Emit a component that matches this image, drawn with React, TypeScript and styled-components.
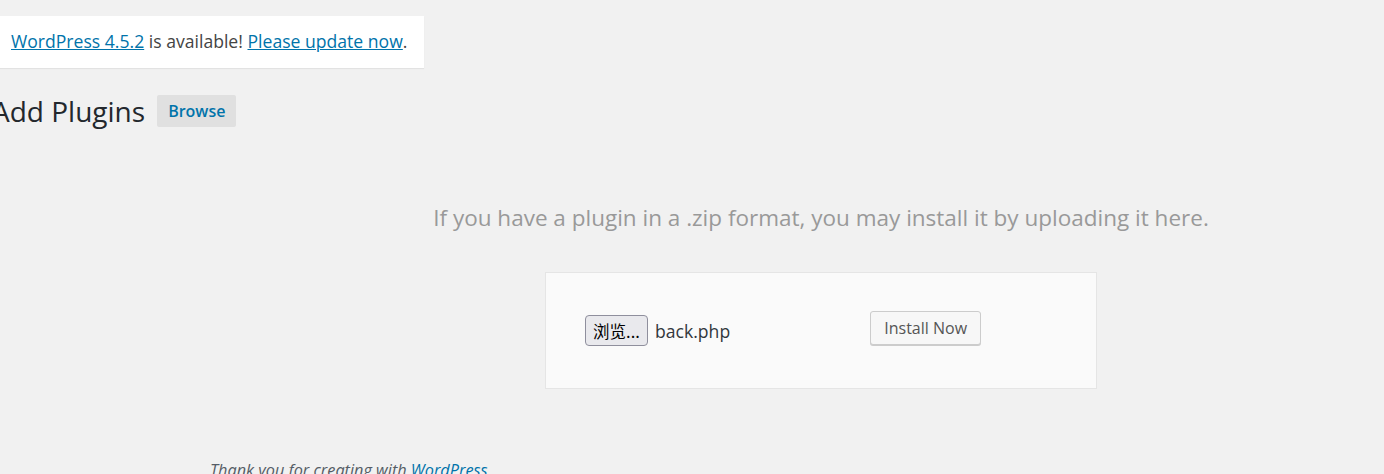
import React from "react";
import styled, { createGlobalStyle } from "styled-components";

const GlobalStyle = createGlobalStyle`
  html, body {
    margin: 0;
    padding: 0;
    background: #f1f1f1;
    overflow: hidden;
  }
  body {
    font-family: "Open Sans", "Noto Sans", sans-serif;
    color: #444;
  }
`;

const Page = styled.div`
  width: 1384px;
  height: 474px;
  overflow: hidden;
  position: relative;
`;

const Wrap = styled.div`
  margin-left: -20px;
  display: flex;
  flex-direction: column;
`;

const UpdateNag = styled.div`
  margin-top: 16px;
  width: 444px;
  height: 52px;
  box-sizing: border-box;
  padding-left: 31px;
  padding-bottom: 2px;
  display: flex;
  align-items: center;
  background: #fff;
  box-shadow: 0 1px 1px rgba(0, 0, 0, 0.06);
  font-size: 17.6px;
  color: #444;
`;

const Link = styled.a`
  color: #0073aa;
  text-decoration: underline;
`;

const TitleRow = styled.div`
  display: flex;
  align-items: center;
  margin-top: 27px;
  margin-left: 12px;
  height: 32px;
`;

const PageTitle = styled.h1`
  margin: 0;
  font-size: 28px;
  font-weight: 400;
  color: #23282d;
  line-height: 32px;
`;

const TitleAction = styled.a`
  margin-left: 12px;
  height: 32px;
  padding: 0 11px;
  display: inline-flex;
  align-items: center;
  background: #e0e0e0;
  border-radius: 2px;
  color: #0073aa;
  font-size: 16px;
  font-weight: 600;
  text-decoration: none;
`;

const UploadSection = styled.div`
  margin-left: 441px;
  width: 800px;
  display: flex;
  flex-direction: column;
  align-items: center;
`;

const InstallHelp = styled.p`
  margin: 0;
  margin-top: 76px;
  font-size: 22.5px;
  line-height: 30px;
  color: #999;
`;

const UploadForm = styled.form`
  margin-top: 39px;
  width: 552px;
  height: 117px;
  box-sizing: border-box;
  background: #fafafa;
  border: 1px solid #e5e5e5;
  padding: 38px 39px 0;
  display: flex;
  align-items: flex-start;
`;

const FileField = styled.div`
  display: flex;
  align-items: center;
  margin-top: 4px;
`;

const FileButton = styled.span`
  width: 63px;
  height: 31px;
  box-sizing: border-box;
  display: inline-flex;
  align-items: center;
  justify-content: center;
  background: #e9e9ed;
  border: 1px solid #8f8f9d;
  border-radius: 4px;
  font-family: "Noto Sans CJK SC", "Noto Sans", sans-serif;
  font-size: 16.5px;
  color: #000;
`;

const FileName = styled.span`
  margin-left: 7px;
  font-size: 17.6px;
  color: #32373c;
`;

const Button = styled.button`
  margin-left: 140px;
  height: 34px;
  width: 111px;
  box-sizing: border-box;
  background: #f7f7f7;
  border: 1px solid #ccc;
  border-radius: 3px;
  box-shadow: 0 1px 0 #ccc;
  color: #555;
  font-family: "Open Sans", sans-serif;
  font-size: 16px;
  padding: 0;
`;

const Footer = styled.p`
  margin: 0;
  margin-top: 70px;
  margin-left: 230px;
  font-size: 16.3px;
  font-style: italic;
  color: #555d66;
  line-height: 22px;
`;

const FooterLink = styled.a`
  color: #0073aa;
  text-decoration: none;
`;

const App: React.FC = () => {
  return (
    <Page>
      <GlobalStyle />
      <Wrap>
        <UpdateNag>
          <Link href="#">WordPress 4.5.2</Link>&nbsp;is available!&nbsp;
          <Link href="#">Please update now</Link>.
        </UpdateNag>

        <TitleRow>
          <PageTitle>Add Plugins</PageTitle>
          <TitleAction href="#">Browse</TitleAction>
        </TitleRow>

        <UploadSection>
          <InstallHelp>
            If you have a plugin in a .zip format, you may install it by
            uploading it here.
          </InstallHelp>
          <UploadForm onSubmit={(e) => e.preventDefault()}>
            <FileField>
              <FileButton>浏览...</FileButton>
              <FileName>back.php</FileName>
            </FileField>
            <Button type="submit">Install Now</Button>
          </UploadForm>
        </UploadSection>

        <Footer>
          Thank you for creating with <FooterLink href="#">WordPress</FooterLink>.
        </Footer>
      </Wrap>
    </Page>
  );
};

export default App;
